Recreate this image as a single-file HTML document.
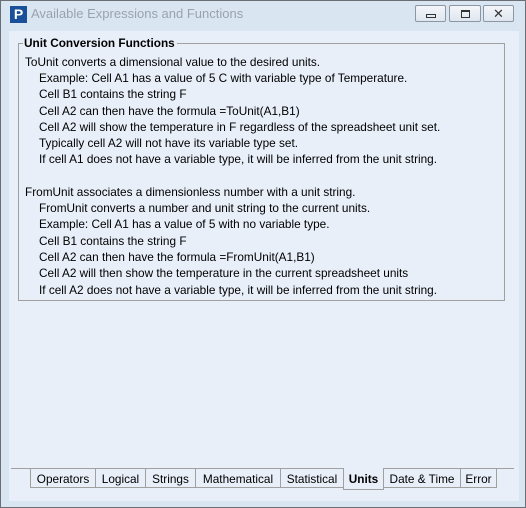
<!DOCTYPE html>
<html><head><style>
*{margin:0;padding:0;box-sizing:border-box}
body{width:526px;height:508px;overflow:hidden;background:#dce7f3;font-family:"Liberation Sans",sans-serif;font-size:11.8px;color:#000;position:relative}
.win{position:absolute;left:0;top:0;width:526px;height:508px;border:1px solid #6b6f75;background:#dae5f2}
.client{position:absolute;left:8px;top:30px;width:510px;height:470px;background:#e8eff9}
.title{position:absolute;left:30px;top:5px;font-size:13px;color:#9aa3ad}
.logo{position:absolute;left:9px;top:5px;width:17px;height:17px;background:#1a4f9a;color:#fff;font-weight:bold;font-size:14px;line-height:17px;text-align:center}
.btn{position:absolute;top:4px;height:17px;border:1px solid #8d96a3;border-radius:2px;background:linear-gradient(#f3f6fa,#dfe6ef)}
.grp{position:absolute;left:17px;top:42px;width:487px;height:258px;border:1px solid #a0a0a0}
.gt{position:absolute;left:22px;top:35px;background:#e8eff9;font-weight:bold;padding:0 2px 0 1px}
.tx{position:absolute;left:24px;white-space:nowrap}
.in{left:38px}
.tabline{position:absolute;left:10px;top:467px;width:503px;height:1px;background:#a0a0a0}
.tab{position:absolute;top:468px;height:19px;border:1px solid #a0a0a0;border-top:none;text-align:center;line-height:21px;background:#e8eff9}
</style></head><body>
<div class="win">
<div class="logo">P</div>
<div class="title">Available Expressions and Functions</div>
<div class="btn" style="left:414px;width:31px"><div style="position:absolute;left:10px;top:8px;width:10px;height:4px;border:1px solid #333"></div></div>
<div class="btn" style="left:448px;width:32px"><div style="position:absolute;left:11px;top:4px;width:9px;height:8px;border:1px solid #333;border-top-width:2px"></div></div>
<div class="btn" style="left:482px;width:31px;text-align:center;line-height:15px;font-size:13px;color:#333">✕</div>
<div class="client"></div>
<div class="grp"></div>
<div class="gt">Unit Conversion Functions</div>
<div class="tx" style="top:54px">ToUnit converts a dimensional value to the desired units.</div>
<div class="tx in" style="top:70px">Example: Cell A1 has a value of 5 C with variable type of Temperature.</div>
<div class="tx in" style="top:86px">Cell B1 contains the string F</div>
<div class="tx in" style="top:103px">Cell A2 can then have the formula =ToUnit(A1,B1)</div>
<div class="tx in" style="top:119px">Cell A2 will show the temperature in F regardless of the spreadsheet unit set.</div>
<div class="tx in" style="top:135px">Typically cell A2 will not have its variable type set.</div>
<div class="tx in" style="top:151px">If cell A1 does not have a variable type, it will be inferred from the unit string.</div>
<div class="tx" style="top:184px">FromUnit associates a dimensionless number with a unit string.</div>
<div class="tx in" style="top:200px">FromUnit converts a number and unit string to the current units.</div>
<div class="tx in" style="top:216px">Example: Cell A1 has a value of 5 with no variable type.</div>
<div class="tx in" style="top:233px">Cell B1 contains the string F</div>
<div class="tx in" style="top:249px">Cell A2 can then have the formula =FromUnit(A1,B1)</div>
<div class="tx in" style="top:265px">Cell A2 will then show the temperature in the current spreadsheet units</div>
<div class="tx in" style="top:282px">If cell A2 does not have a variable type, it will be inferred from the unit string.</div>
<div class="tabline"></div>
<div class="tab" style="left:29px;width:66px">Operators</div>
<div class="tab" style="left:94px;width:51px">Logical</div>
<div class="tab" style="left:144px;width:51px">Strings</div>
<div class="tab" style="left:194px;width:86px">Mathematical</div>
<div class="tab" style="left:279px;width:64px">Statistical</div>
<div class="tab" style="left:342px;width:41px;top:467px;height:22px;font-weight:bold;line-height:23px">Units</div>
<div class="tab" style="left:382px;width:78px">Date &amp; Time</div>
<div class="tab" style="left:459px;width:37px">Error</div>
</div>
</body></html>
